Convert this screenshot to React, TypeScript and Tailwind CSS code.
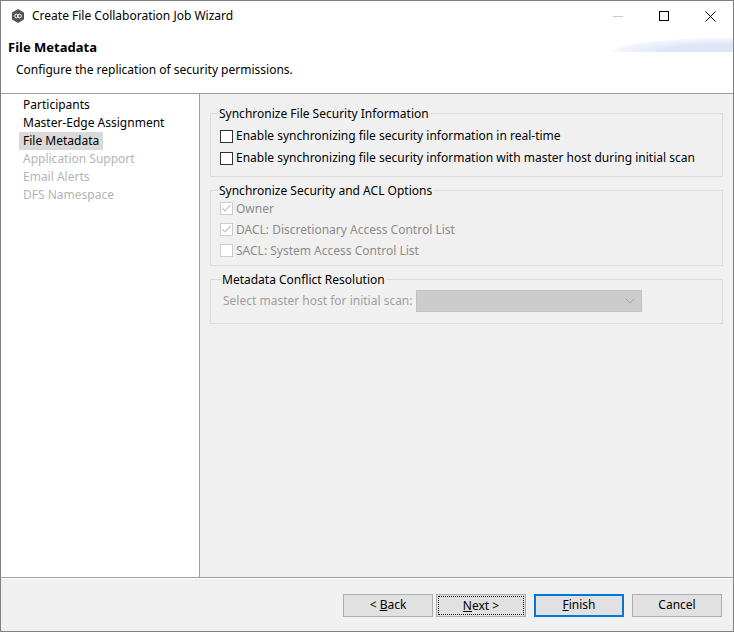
import React from "react";

const Check = ({ checked, disabled }: { checked?: boolean; disabled?: boolean }) => (
  <span className={`w-[13px] h-[13px] border flex items-center justify-center bg-white shrink-0 ${disabled ? "border-[#cccccc]" : "border-[#333333]"}`}>
    {checked && (
      <svg width="11" height="11" viewBox="0 0 11 11"><path d="M1.5 5.5 L4 8 L9.5 2" fill="none" stroke="#c4c4c4" strokeWidth="1.2" /></svg>
    )}
  </span>
);

const Group = ({ title, children, cls }: { title: string; children: React.ReactNode; cls?: string }) => (
  <fieldset className={`border border-[#dcdcdc] mx-0 px-[9px] ${cls ?? ""}`}>
    <legend className="px-[1px] ml-[-2px] text-[12px] leading-[15px] text-black">{title}</legend>
    {children}
  </fieldset>
);

export default function App() {
  return (
    <div className="w-[734px] h-[632px] border border-[#808080] bg-[#f0f0f0] flex flex-col text-[12px] text-black" style={{ fontFamily: "'Noto Sans', 'Open Sans', sans-serif" }}>
      <div className="bg-white h-[92px] flex flex-col shrink-0 relative overflow-hidden">
        <div className="h-[30px] flex items-center">
          <div className="ml-[10px] w-[14px] h-[14px] flex items-center justify-center">
            <svg width="14" height="14" viewBox="0 0 14 14"><polygon points="7,0 13,3.5 13,10.5 7,14 1,10.5 1,3.5" fill="#555" /><circle cx="5.5" cy="7" r="1.8" fill="none" stroke="#fff" strokeWidth="1" /><circle cx="8.5" cy="7" r="1.8" fill="none" stroke="#fff" strokeWidth="1" /></svg>
          </div>
          <span className="ml-[7px] text-[12px]">Create File Collaboration Job Wizard</span>
          <div className="ml-auto flex items-center h-full">
            <div className="w-[46px] flex justify-center"><div className="w-[10px] h-[1px] bg-[#c8c8c8]" /></div>
            <div className="w-[46px] flex justify-center"><div className="w-[10px] h-[10px] border border-black" /></div>
            <div className="w-[46px] flex justify-center">
              <svg width="11" height="11" viewBox="0 0 11 11"><path d="M0.5 0.5 L10.5 10.5 M10.5 0.5 L0.5 10.5" stroke="#000" strokeWidth="1" /></svg>
            </div>
          </div>
        </div>
        <div className="absolute right-0 top-[31px] w-[142px] h-[20px]" style={{ background: "radial-gradient(ellipse 120% 100% at 100% 100%, #dfe5f7 40%, rgba(240,243,252,0.6) 70%, rgba(255,255,255,0) 72%)" }} />
        <div className="ml-[7px] mt-[7px] font-bold text-[13px] leading-[18px]">File Metadata</div>
        <div className="ml-[15px] mt-[6px] leading-[16px]">Configure the replication of security permissions.</div>
      </div>
      <div className="h-[1px] bg-[#a0a0a0]" />
      <div className="flex flex-1 min-h-0">
        <div className="w-[199px] bg-white border-r border-[#a0a0a0] pt-[2px] pl-[18px]">
          {["Participants", "Master-Edge Assignment", "File Metadata", "Application Support", "Email Alerts", "DFS Namespace"].map((t, i) => (
            <div key={t} className="h-[18px] leading-[18px]">
              <span className={`px-[4px] inline-block ${i === 2 ? "bg-[#d9d9d9]" : ""} ${i > 2 ? "text-[#b4b4b4]" : ""}`}>{t}</span>
            </div>
          ))}
        </div>
        <div className="flex-1 pl-[10px] pr-[10px] pt-[12px] flex flex-col gap-[6px]">
          <Group title="Synchronize File Security Information" cls="pb-[7px]">
            <div className="flex items-center gap-[3px] h-[22px] mt-[4px]"><Check /><span>Enable synchronizing file security information in real-time</span></div>
            <div className="flex items-center gap-[3px] h-[22px]"><Check /><span>Enable synchronizing file security information with master host during initial scan</span></div>
          </Group>
          <Group title="Synchronize Security and ACL Options" cls="pb-[4px]">
            {[["Owner", true], ["DACL: Discretionary Access Control List", true], ["SACL: System Access Control List", false]].map(([t, c]) => (
              <div key={t as string} className="flex items-center gap-[3px] h-[21px] text-[#8c8c8c] first:mt-[3px]"><Check disabled checked={c as boolean} /><span>{t as string}</span></div>
            ))}
          </Group>
          <Group title="Metadata Conflict Resolution" cls="pb-[11px] pl-[12px]">
            <div className="flex items-center mt-[3px]">
              <span className="text-[#a0a0a0] mr-[3px]">Select master host for initial scan:</span>
              <div className="w-[226px] h-[22px] bg-[#cccccc] border border-[#c2c2c2] flex items-center justify-end pr-[6px]">
                <svg width="10" height="6" viewBox="0 0 10 6"><path d="M0.5 0.5 L5 5 L9.5 0.5" fill="none" stroke="#a8a8a8" strokeWidth="1" /></svg>
              </div>
            </div>
          </Group>
        </div>
      </div>
      <div className="h-[1px] bg-[#a0a0a0]" />
      <div className="h-[1px] bg-white" />
      <div className="h-[52px] flex items-center justify-end pr-[11px] shrink-0">
        <button className="w-[90px] h-[23px] bg-[#e1e1e1] border border-[#adadad]">&lt; <u>B</u>ack</button>
        <button className="ml-[3px] w-[90px] h-[23px] bg-[#e1e1e1] border border-[#adadad] p-[1px]"><span className="block w-full h-full border border-dotted border-black leading-[17px]"><u>N</u>ext &gt;</span></button>
        <button className="ml-[8px] w-[90px] h-[23px] bg-[#e1e1e1] border-2 border-[#0078d7]"><u>F</u>inish</button>
        <button className="ml-[8px] w-[90px] h-[23px] bg-[#e1e1e1] border border-[#adadad]">Cancel</button>
      </div>
    </div>
  );
}
